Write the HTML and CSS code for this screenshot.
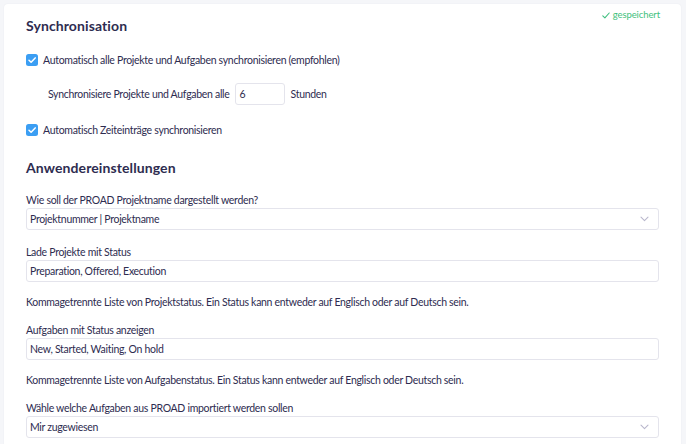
FILE: index.html
```html
<!DOCTYPE html>
<html lang="de">
<head>
<meta charset="utf-8">
<title>Einstellungen</title>
<link rel="stylesheet" href="styles.css">
</head>
<body>
<div class="card">
  <div class="saved">
    <svg class="saved-icon" width="8" height="7" viewBox="0 0 8 7"><path d="M0.8 3.8 L2.9 5.8 L7.2 1" fill="none" stroke="#3fbf7f" stroke-width="1.1" stroke-linecap="round" stroke-linejoin="round"/></svg>
    <span>gespeichert</span>
  </div>

  <h2 class="heading h-first">Synchronisation</h2>

  <div class="check-row r1">
    <span class="checkbox"><svg width="12" height="12" viewBox="0 0 12 12"><path d="M3 6.2 L5.1 8.2 L9.2 3.9" fill="none" stroke="#fff" stroke-width="1.5" stroke-linecap="round" stroke-linejoin="round"/></svg></span>
    <span>Automatisch alle Projekte und Aufgaben synchronisieren (empfohlen)</span>
  </div>

  <div class="interval-row">
    <span>Synchronisiere Projekte und Aufgaben alle</span>
    <div class="small-input">6</div>
    <span>Stunden</span>
  </div>

  <div class="check-row r3">
    <span class="checkbox"><svg width="12" height="12" viewBox="0 0 12 12"><path d="M3 6.2 L5.1 8.2 L9.2 3.9" fill="none" stroke="#fff" stroke-width="1.5" stroke-linecap="round" stroke-linejoin="round"/></svg></span>
    <span>Automatisch Zeiteinträge synchronisieren</span>
  </div>

  <h2 class="heading h-second">Anwendereinstellungen</h2>

  <div class="group g1">
    <div class="label">Wie soll der PROAD Projektname dargestellt werden?</div>
    <div class="field select">
      <span>Projektnummer | Projektname</span>
      <svg class="chev" width="9" height="6" viewBox="0 0 9 6"><path d="M1 1.2 L4.5 4.6 L8 1.2" fill="none" stroke="#b9b7cc" stroke-width="1.1" stroke-linecap="round" stroke-linejoin="round"/></svg>
    </div>
  </div>

  <div class="group">
    <div class="label">Lade Projekte mit Status</div>
    <div class="field"><span>Preparation, Offered, Execution</span></div>
  </div>

  <p class="help">Kommagetrennte Liste von Projektstatus. Ein Status kann entweder auf Englisch oder auf Deutsch sein.</p>

  <div class="group">
    <div class="label">Aufgaben mit Status anzeigen</div>
    <div class="field"><span>New, Started, Waiting, On hold</span></div>
  </div>

  <p class="help">Kommagetrennte Liste von Aufgabenstatus. Ein Status kann entweder auf Englisch oder Deutsch sein.</p>

  <div class="group">
    <div class="label">Wähle welche Aufgaben aus PROAD importiert werden sollen</div>
    <div class="field select">
      <span>Mir zugewiesen</span>
      <svg class="chev" width="9" height="6" viewBox="0 0 9 6"><path d="M1 1.2 L4.5 4.6 L8 1.2" fill="none" stroke="#b9b7cc" stroke-width="1.1" stroke-linecap="round" stroke-linejoin="round"/></svg>
    </div>
  </div>
</div>
</body>
</html>
```

FILE: styles.css
```css
* { box-sizing: border-box; }

html, body {
  margin: 0;
  padding: 0;
  background: #f5f6f9;
  height: 100%;
  overflow: hidden;
}

body {
  padding: 4px 5px 0 4px;
  font-family: "Lato", "Liberation Sans", sans-serif;
  color: #2e2c50;
  font-size: 10.5px;
  letter-spacing: -0.3px;
}

.card {
  position: relative;
  background: #fff;
  border-radius: 4px;
  box-shadow: 0 0 2px rgba(40, 40, 80, 0.06);
  padding: 12px 22px 20px 22px;
  min-height: 460px;
}

.saved {
  position: absolute;
  top: 5px;
  right: 21px;
  display: flex;
  align-items: center;
  gap: 3px;
  color: #42c17c;
  font-size: 9.5px;
  letter-spacing: -0.1px;
  line-height: 12px;
}

.heading {
  margin: 0;
  font-size: 14px;
  font-weight: 700;
  line-height: 20px;
  color: #2e2c50;
  letter-spacing: 0.1px;
}

.h-second { margin-top: 20px; }

.check-row {
  display: flex;
  align-items: center;
  gap: 5px;
  line-height: 16px;
  height: 16px;
}

.r1 { margin-top: 16px; }
.r3 { margin-top: 17px; }

.checkbox {
  width: 12px;
  height: 12px;
  border-radius: 2.5px;
  background: #3b9ef3;
  display: flex;
}

.interval-row {
  display: flex;
  align-items: center;
  margin: 15px 0 0 22px;
  height: 22px;
}

.small-input {
  width: 50px;
  height: 22px;
  border: 1px solid #e4e4ec;
  border-radius: 3px;
  margin: 0 6px 0 5px;
  padding-left: 4px;
  line-height: 20px;
}

.group {
  display: flex;
  flex-direction: column;
  gap: 1px;
  margin-top: 15px;
}

.g1 { margin-top: 15px; }

.label {
  line-height: 14px;
}

.field {
  height: 22px;
  border: 1px solid #e4e4ec;
  border-radius: 3px;
  padding: 0 9px 0 3px;
  display: flex;
  align-items: center;
  justify-content: space-between;
}

.help {
  margin: 13px 0 0 0;
  line-height: 14px;
}

.help + .group { margin-top: 14px; }
```
